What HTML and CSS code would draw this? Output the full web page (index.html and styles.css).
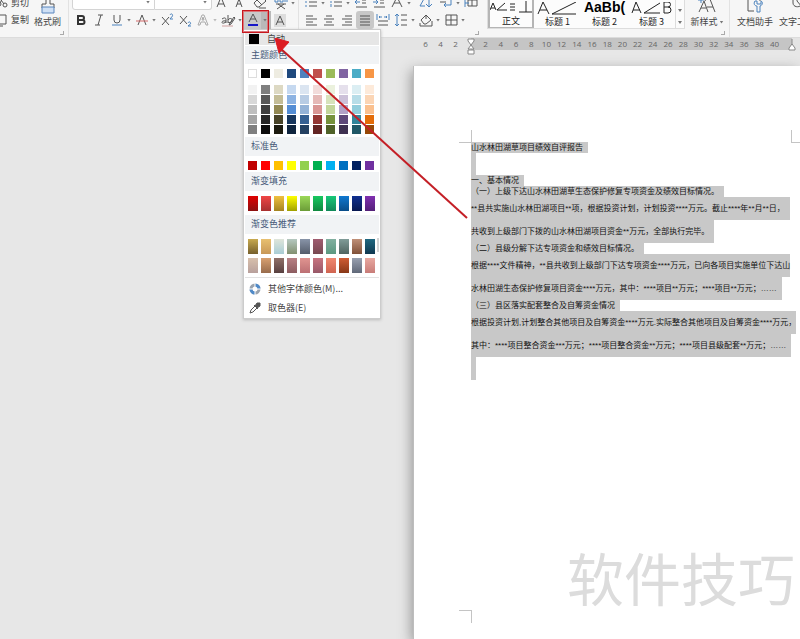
FILE: index.html
```html
<!DOCTYPE html>
<html lang="zh-CN">
<head>
<meta charset="utf-8">
<title>文字编辑</title>
<link rel="stylesheet" href="styles.css">
</head>
<body>
<header class="toolbar">
  <section class="group clipboard" aria-label="剪贴板">
    <div class="stack">
      <button class="labelled row-top"><svg width="12" height="14" viewBox="0 0 12 14"><path d="M2 0l6 8M8 0L4 7"/><circle cx="3" cy="8" r="2"/><circle cx="9" cy="9" r="2"/></svg>剪切</button>
      <button class="labelled row-main"><svg width="12" height="14" viewBox="0 0 12 14"><path d="M2 2h8v9H2zM0 4v9h7"/></svg>复制</button>
    </div>
    <button class="tall-button">
      <svg width="16" height="20" viewBox="0 0 16 20"><path d="M6 0v10H2v4h12v-4h-4V0"/><path class="fill-blue" d="M2 13h12v6H2z"/></svg>
      <span>格式刷</span>
    </button>
    <i class="corner"></i>
  </section>

  <section class="group font" aria-label="字体">
    <div class="row row-top">
      <label class="combo combo-font"><select aria-label="字体"><option></option></select><i class="caret"></i></label>
      <label class="combo combo-size"><select aria-label="字号"><option></option></select><i class="caret"></i></label>
      <button class="tool" aria-label="增大字号"><svg viewBox="0 0 16 16"><path d="M4 12L8 2l4 10M5 9h6"/></svg></button>
      <button class="tool" aria-label="减小字号"><svg viewBox="0 0 16 16"><path d="M5 12l3-8 3 8M6 9h4"/></svg></button>
      <button class="tool wide-eraser" aria-label="清除格式"><svg viewBox="0 0 16 16"><path d="M2 8l7-7 5 5-7 6H5zM5 5l5 5M7 13h7"/></svg></button>
      <button class="tool split" aria-label="拼音指南"><svg viewBox="0 0 16 16"><path class="blue" d="M2 4v3h3V4M7 4h3v3H7zM12 7V4h2v3"/><path d="M3 9h10M5 9l7 5M11 9l-7 5"/></svg><i class="caret"></i></button>
    </div>
    <div class="row row-main">
      <button class="tool" aria-label="加粗"><svg viewBox="0 0 16 16"><path class="heavy" d="M5 4h4a2 2 0 010 4H5zM5 8h4.500a2 2 0 010 4H5z"/></svg></button>
      <button class="tool" aria-label="倾斜"><svg viewBox="0 0 16 16"><path d="M7 3h5M4 13h5M10 3L7 13"/></svg></button>
      <button class="tool split" aria-label="下划线"><svg viewBox="0 0 16 16"><path d="M5 3v5a3 3 0 006 0V3"/><path class="blue" d="M3 13h10"/></svg><i class="caret"></i></button>
      <button class="tool split" aria-label="删除线"><svg viewBox="0 0 16 16"><path d="M4 13L8 3l4 10"/><path class="red" d="M2 9h12"/></svg><i class="caret"></i></button>
      <button class="tool" aria-label="上标"><svg viewBox="0 0 16 16"><path d="M3 5l7 8M10 5l-7 8"/><path class="blue" d="M11 3c1-2 3-1 2.500 1L11 7h3"/></svg></button>
      <button class="tool" aria-label="下标"><svg viewBox="0 0 16 16"><path d="M3 4l7 8M10 4l-7 8"/><path class="blue" d="M11 11c1-2 3-1 2.500 1L11 14h3"/></svg></button>
      <button class="tool split" aria-label="文字效果"><svg viewBox="0 0 16 16"><path class="pale" d="M3 13L7 3h2l4 10h-2l-1-3H6l-1 3zM7 8h2L8 5z"/></svg><i class="caret pale-caret"></i></button>
      <button class="tool split" aria-label="突出显示"><svg viewBox="0 0 16 16"><path class="marker" d="M2 13h11v2H2z"/><path d="M2 7c3-2 4-1 4 1v3M6 9c-5-1-5 3-2 2l2-1M8 3v8M8 8c2-3 5-1 4 1s-3 2-4 1M14 5l-4 6-1 2 2-1 4-6z"/></svg><i class="caret"></i></button>
      <button class="tool split font-color" aria-label="字体颜色" aria-expanded="true"><svg viewBox="0 0 16 16"><path d="M4 10L8 2l4 8M5 7h6"/><path class="navy" d="M3 13h10"/></svg><i class="caret"></i></button>
      <button class="tool" aria-label="字符底纹"><svg viewBox="0 0 16 16"><path class="shade" d="M2 2h12v13H2z"/><path d="M4 13L8 4l4 9M5 10h6"/></svg></button>
    </div>
  </section>

  <section class="group paragraph" aria-label="段落">
    <div class="row row-top">
      <button class="tool split" aria-label="项目符号"><svg viewBox="0 0 16 16"><path d="M6 3h8M6 7h8M6 11h8"/><path class="blue" d="M2 3h2M2 7h2M2 11h2"/></svg><i class="caret"></i></button>
      <button class="tool split" aria-label="编号"><svg viewBox="0 0 16 16"><path d="M6 3h8M6 7h8M6 11h8"/><path class="blue" d="M3 1v3M2 7h2M3 9v3"/></svg><i class="caret"></i></button>
      <button class="tool" aria-label="减少缩进"><svg viewBox="0 0 16 16"><path d="M3 2h10M9 5h4M9 8h4M3 12h11"/><path class="blue" d="M7 7H2l2-2M2 7l2 2"/></svg></button>
      <button class="tool" aria-label="增加缩进"><svg viewBox="0 0 16 16"><path d="M3 2h10M9 5h4M9 8h4M3 12h11"/><path class="blue" d="M2 7h5L5 5M7 7L5 9"/></svg></button>
      <button class="tool split" aria-label="中文版式"><svg viewBox="0 0 16 16"><path d="M3 12L8 2l5 10M5 8h6M3 2l3 2M13 2l-3 2"/></svg><i class="caret"></i></button>
      <button class="tool wide-sort" aria-label="排序"><svg viewBox="0 0 16 16"><path class="blue" d="M3 2h5l-5 9h5M12 1v10M9 9l3 3 3-3"/></svg></button>
      <button class="tool split" aria-label="显示标记"><svg viewBox="0 0 16 16"><path d="M2 3h12M2 7h6"/><path class="blue" d="M13 5v5H6l2-2M6 10l2 2"/></svg><i class="caret"></i></button>
      <button class="tool" aria-label="制表位"><svg viewBox="0 0 16 16"><path d="M5 1h9v10H5zM5 5h9M9 1v10"/><path class="blue" d="M2 5v7M2 8h4"/></svg></button>
    </div>
    <div class="row row-main">
      <button class="tool" aria-label="左对齐"><svg viewBox="0 0 16 16"><path d="M3 4h7M3 7h11M3 10h7M3 13h11"/></svg></button>
      <button class="tool" aria-label="居中"><svg viewBox="0 0 16 16"><path d="M5 4h6M3 7h10M5 10h6M3 13h10"/></svg></button>
      <button class="tool" aria-label="右对齐"><svg viewBox="0 0 16 16"><path d="M6 4h7M3 7h10M6 10h7M3 13h10"/></svg></button>
      <button class="tool pressed" aria-label="两端对齐" aria-pressed="true"><svg viewBox="0 0 16 16"><path d="M3 4h10M3 7h10M3 10h10M3 13h10"/></svg></button>
      <button class="tool" aria-label="分散对齐"><svg viewBox="0 0 16 16"><path d="M3 9h10M3 13h10"/><path class="blue" d="M2 2v6M14 2v6M4 5h3M9 5h3M5 4L4 5l1 1M11 4l1 1-1 1"/></svg></button>
      <button class="tool split" aria-label="行距"><svg viewBox="0 0 16 16"><path d="M8 3h6M8 8h6M8 13h6"/><path class="blue" d="M4 2v12M2 4l2-2 2 2M2 12l2 2 2-2"/></svg><i class="caret"></i></button>
      <button class="tool split" aria-label="底纹颜色"><svg viewBox="0 0 16 16"><path d="M3 8l5-5 5 5-5 4H6zM8 3v4M2 11v3h12V9"/></svg><i class="caret"></i></button>
      <button class="tool split" aria-label="边框"><svg viewBox="0 0 16 16"><path d="M3 3h11v10H3zM8 3v10M3 8h11"/></svg><i class="caret"></i></button>
    </div>
    <i class="corner"></i>
  </section>

  <section class="group styles" aria-label="样式">
    <div class="gallery">
      <button class="card selected"><svg width="44" height="14" viewBox="0 0 44 14"><path d="M1 9L4 2l3 7M2 7h4M16 2L8 9h10M21 3h5M21 6h5M21 9h5M30 11h14M37 0v11"/></svg><span>正文</span></button>
      <button class="card"><svg width="44" height="14" viewBox="0 0 44 14"><path d="M2 12L7 0l6 12M4 8h7M16 12h24M16 12L40 0"/></svg><span>标题 1</span></button>
      <button class="card"><b>AaBb(</b><span>标题 2</span></button>
      <button class="card"><svg width="44" height="14" viewBox="0 0 44 14"><path d="M2 11L6 0l5 11M3 8h7M14 11h16M14 11L30 1M34 0v11h4a3 3 0 000-6h-4M38 5a2 2 0 000-5h-4"/></svg><span>标题 3</span></button>
      <button class="more" aria-label="更多样式"><i class="caret"></i><i class="caret"></i></button>
    </div>
    <button class="tall-button new-style">
      <svg width="20" height="20" viewBox="0 0 20 20"><path d="M2 18L7 7l4 11M4 14h5M8 7l3-7 7 18M10 13h6"/><path class="blue" d="M4 3v6M1 6h6"/></svg>
      <span>新样式<i class="caret"></i></span>
    </button>
    <i class="corner"></i>
  </section>

  <section class="group helpers" aria-label="工具">
    <button class="tall-button"><svg width="20" height="20" viewBox="0 0 20 20"><path d="M9 17H3V0M15 0v7"/><path class="blue" d="M10 7c-2 3 0 5 2 5v6h3v-6c3-1 3-4 1-5v3h-4V7z"/></svg><span>文档助手</span></button>
    <button class="tall-button"><svg width="20" height="20" viewBox="0 0 20 20"><path d="M6 3v6c0 4 6 5 8 2M10 3v4l5 6"/></svg><span>文字工具</span></button>
  </section>
</header>

<div class="ruler">
  <div class="ruler-left"><span>6</span><span>4</span><span>2</span></div>
  <div class="ruler-body" id="ruler"></div>
  <svg class="marker-left" width="8" height="18" viewBox="0 0 8 18"><path d="M1 1h6v2L4 7 1 3zM1 11l3-4 3 4zM1 12h6v4H1z"/></svg>
  <svg class="marker-right" width="8" height="18" viewBox="0 0 8 18"><path d="M4 1v6M1 10l3-4 3 4v2H1z"/></svg>
</div>

<main class="workspace">
  <article class="page">
    <i class="crop top-left"></i><i class="crop top-right"></i><i class="crop bottom-left"></i>
    <p class="short">山水林田湖草项目绩效自评报告</p>
    <p class="short"></p>
    <p class="short"></p>
    <p class="short">一、基本情况</p>
    <p class="short">（一）上级下达山水林田湖草生态保护修复专项资金及绩效目标情况。</p>
    <p>**县共实施山水林田湖项目**项，根据投资计划，计划投资****万元。截止****年**月**日，</p>
    <p>共收到上级部门下拨的山水林田湖项目资金**万元，全部执行完毕。</p>
    <p class="short">（二）县级分解下达专项资金和绩效目标情况。</p>
    <p class="wrapped">根据****文件精神，**县共收到上级部门下达专项资金****万元，已向各项目实施单位下达山</p>
    <p>水林田湖生态保护修复项目资金****万元，其中：****项目**万元；****项目**万元；……</p>
    <p class="short">（三）县区落实配套整合及自筹资金情况</p>
    <p class="wrapped">根据投资计划,计划整合其他项目及自筹资金****万元.实际整合其他项目及自筹资金****万元，</p>
    <p>其中：****项目整合资金***万元；****项目整合资金**万元；****项目县级配套**万元；……</p>
    <p></p>
  </article>
</main>

<aside class="color-menu" aria-label="字体颜色">
  <button class="automatic"><i></i>自动</button>
  <h2 class="first">主题颜色</h2>
  <div class="swatches theme" id="theme"></div>
  <div class="swatches shades" id="shades"></div>
  <h2>标准色</h2>
  <div class="swatches standard" id="standard"></div>
  <h2>渐变填充</h2>
  <div class="swatches gradient" id="gradient"></div>
  <h2>渐变色推荐</h2>
  <div class="swatches gradient suggested" id="suggested"></div>
  <div class="actions">
    <button><svg width="12" height="12" viewBox="0 0 12 12"><circle class="ring-gray" cx="6" cy="6" r="4"/><path class="ring-blue" d="M6 2a4 4 0 014 4M6 10a4 4 0 01-4-4"/><path class="gap" d="M6 0v12M0 6h12"/></svg>其他字体颜色(M)...</button>
    <button><svg width="12" height="12" viewBox="0 0 12 12"><path d="M1 11l1-3 4-4 2 2-4 4zM5 3l4 4"/><path class="solid" d="M6 4l2-3 3 0 0 3-3 2z"/></svg>取色器(E)</button>
  </div>
</aside>

<div class="watermark">软件技巧</div>
<div class="highlight-box"></div>
<svg class="arrow" width="200" height="190" viewBox="0 0 200 190"><path class="shaft" d="M10 10L197 180"/><path class="head" d="M5 0L19 4 9 15z"/></svg>
<script src="script.js"></script>
</body>
</html>
```
FILE: styles.css
```css
* { box-sizing: border-box; }

body {
  margin: 0;
  min-height: 100vh;
  display: flex;
  flex-direction: column;
  overflow: hidden;
  position: relative;
  background: #e7e7e7;
  color: #444;
  font: 9px/12px "Noto Sans CJK SC", sans-serif;
}

button {
  margin: 0;
  padding: 0;
  border: 0;
  background: none;
  color: inherit;
  font: inherit;
  white-space: nowrap;
}

svg { fill: none; stroke: #555; stroke-width: 1; flex: none; }
.blue { stroke: #4b82bd; }
.red { stroke: #d26a6a; }
.pale { stroke: #aaa; }
.heavy { stroke: #333; stroke-width: 2; }
.navy { stroke: #1818c8; stroke-width: 2; }
.shade { fill: #ddd; stroke: none; }
.marker { fill: #e3caca; stroke: none; }
.fill-blue { fill: #cfe0f5; stroke: #5b86bd; }

.caret {
  flex: none;
  width: 4px;
  height: 3px;
  background: #777;
  clip-path: polygon(0 0, 100% 0, 50% 100%);
}
.pale-caret { background: #bbb; }

/* Toolbar: content hangs from the lower edge */
.toolbar {
  display: flex;
  height: 38px;
  overflow: hidden;
  background: #f6f6f6;
  border-bottom: 1px solid #dcdcdc;
}
.group {
  position: relative;
  flex: none;
  display: flex;
  flex-direction: column;
  justify-content: flex-end;
  padding-bottom: 8px;
}
.row { display: flex; align-items: center; }
.row-top { height: 16px; }
.row-main { height: 18px; }
.tool {
  flex: none;
  width: 18px;
  height: 18px;
  display: flex;
  align-items: center;
  justify-content: center;
}
.tool svg { width: 16px; height: 16px; }
.split { width: 25px; justify-content: flex-start; padding-left: 1px; gap: 2px; }
.corner {
  position: absolute;
  right: 4px;
  bottom: 2px;
  width: 4px;
  height: 4px;
  border: solid #aaa;
  border-width: 0 1px 1px 0;
}

.clipboard { width: 69px; flex-direction: row; justify-content: flex-start; align-items: flex-end; border-right: 1px solid #e2e2e2; }
.stack { width: 34px; display: flex; flex-direction: column; }
.labelled { display: flex; align-items: center; gap: 3px; margin-left: -4px; }
.tall-button {
  display: flex;
  flex-direction: column;
  align-items: center;
  justify-content: flex-end;
  gap: 2px;
  padding-bottom: 1px;
}
.tall-button span { display: flex; align-items: center; gap: 2px; }

.font { width: 230px; padding-left: 3px; border-right: 1px solid #e2e2e2; }
.combo {
  flex: none;
  display: flex;
  align-items: center;
  height: 16px;
  margin-bottom: 2px;
  background: #fff;
  border: 1px solid #d4d4d4;
}
.combo select { flex: 1; min-width: 0; height: 12px; border: 0; background: none; appearance: none; }
.combo .caret { margin-right: 4px; }
.combo-font { width: 83px; border-radius: 3px 0 0 3px; }
.combo-size { width: 57px; border-left: 0; border-radius: 0 3px 3px 0; }
.wide-eraser { width: 24px; }
.font-color { width: 27px; background: linear-gradient(90deg, #c9c9c9 17px, #b9b9b9 17px); }

.paragraph { width: 184px; padding-left: 3px; }
.wide-sort { width: 24px; }
.pressed { background: #c8c8c8; border-radius: 3px; }

.styles { width: 247px; flex-direction: row; justify-content: flex-start; padding: 0; align-items: flex-end; border-right: 1px solid #e2e2e2; }
.gallery {
  display: flex;
  height: 30px;
  margin-left: 4px;
  margin-bottom: 8px;
  background: #fcfcfc;
  border: 1px solid #ddd;
  border-top: 0;
  color: #222;
}
.card {
  width: 47px;
  overflow: hidden;
  display: flex;
  flex-direction: column;
  align-items: center;
  justify-content: flex-end;
}
.card b { height: 16px; font: bold 14px/14px "Liberation Sans", sans-serif; color: #000; }
.selected { width: 46px; border: solid #b5b5b5; border-width: 0 2px 1px; }
.card svg { stroke: #222; }
.more { width: 9px; display: flex; flex-direction: column; align-items: center; justify-content: flex-end; gap: 9px; padding-bottom: 4px; border-left: 1px solid #ddd; }
.new-style { width: 48px; margin-bottom: 8px; }

.helpers { flex-direction: row; padding-left: 6px; gap: 4px; }
.helpers .tall-button { width: 38px; }

/* Ruler */
.ruler {
  position: relative;
  display: flex;
  height: 28px;
  padding: 0 8px 16px 418px;
  background: #e4e4e4 linear-gradient(#e7e7e7, #e7e7e7) 0 12px no-repeat;
  color: #666;
  font: 8px/12px "Open Sans", sans-serif;
  text-align: center;
}
.ruler-left { display: flex; width: 53px; }
.ruler-left span { width: 15px; }
.ruler-body { flex: 1; display: flex; padding: 0 10px 0 7px; background: #c5c5c5; }
.ruler-body span { flex: 1 1 0; }
.ruler svg { position: absolute; top: 0; fill: #fff; stroke: #888; }
.marker-left { left: 467px; }
.marker-right { right: 4px; }

/* Document */
.workspace { flex: 1; display: flex; padding-left: 414px; }
.page {
  position: relative;
  flex: 1;
  min-width: 0;
  padding: 76px 0 0 57px;
  background: #fff;
  box-shadow: -1px 0 0 #bdbdbd, -3px 4px 12px #999;
  color: #111;
  font: 8px/11px "Liberation Sans", "Noto Sans CJK SC", sans-serif;
}
.page p {
  width: fit-content;
  height: 23px;
  margin: 0;
  padding-right: 5px;
  line-height: 23px;
  white-space: nowrap;
  background: #c8c8c8;
}
.page .short { height: 11px; line-height: 11px; }
.page .wrapped { padding-right: 0; }
.crop { position: absolute; width: 13px; height: 13px; border: 0 solid #c4c4c4; }
.top-left { left: 45px; top: 64px; border-width: 0 1px 1px 0; }
.top-right { right: -4px; top: 64px; border-width: 0 0 1px 1px; }
.bottom-left { left: 45px; top: 544px; border-width: 1px 1px 0 0; }

/* Colour menu */
.color-menu {
  position: absolute;
  left: 243px;
  top: 29px;
  width: 138px;
  padding: 2px 1px 0;
  background: #fff;
  border: 1px solid #ccc;
  box-shadow: 0 1px 3px #bbb;
}
.automatic {
  display: flex;
  align-items: center;
  gap: 8px;
  width: 100%;
  height: 13px;
  padding-left: 4px;
  background: #e6e6e6;
}
.automatic i { width: 10px; height: 10px; background: #000; }
.color-menu h2 {
  height: 19px;
  margin: 0;
  padding-left: 6px;
  background: #f1f3f5;
  color: #465a78;
  font: 9px/18px "Noto Sans CJK SC", sans-serif;
}
.color-menu .first { margin-top: 1px; height: 18px; }
.swatches { display: grid; grid-template-columns: repeat(10, 9px); column-gap: 4px; padding-left: 3px; }
.swatches button { height: 9px; }
.theme { padding-top: 5px; }
.theme button:first-child { outline: 1px solid #ddd; outline-offset: -1px; }
.shades { row-gap: 1px; padding-top: 7px; padding-bottom: 3px; }
.standard { padding-top: 5px; padding-bottom: 2px; }
.gradient { grid-template-columns: repeat(10, 10px); column-gap: 3px; row-gap: 4px; padding-top: 5px; padding-bottom: 4px; }
.gradient button { height: 15px; }
.suggested { background: linear-gradient(#d4d4d4, #d4d4d4) right 4px / 2px 14px no-repeat; }
.actions { display: flex; flex-direction: column; padding: 1px 0; border-top: 1px solid #e2e2e2; }
.actions button { display: flex; align-items: center; gap: 7px; height: 19px; padding-left: 4px; }
.ring-gray { stroke: #9aa3ae; stroke-width: 3; }
.ring-blue { stroke: #4f8ac9; stroke-width: 3; }
.gap { stroke: #fff; }
.solid { fill: #555; }

/* Overlays */
.watermark {
  position: absolute;
  right: 5px;
  bottom: 31px;
  color: #dcdcdc;
  font: 57px/64px "Noto Sans CJK SC", sans-serif;
}
.highlight-box { position: absolute; left: 242px; top: 10px; width: 27px; height: 23px; border: 1px solid #c8161d; outline: 1px solid #d9767a; outline-offset: -2px; }
.arrow { position: absolute; left: 270px; top: 38px; pointer-events: none; }
.shaft { stroke: #c41f26; stroke-width: 2; }
.head { fill: #dc1c22; stroke: #dc1c22; }
```
FILE: script.js
```js
const palettes = {
  theme: ["#ffffff", "#000000", "#eeece1", "#1f497d", "#4f81bd", "#c0504d", "#9bbb59", "#8064a2", "#4bacc6", "#f79646"],
  shades: [
    "#f2f2f2", "#7f7f7f", "#ddd9c3", "#c6d9f0", "#dbe5f1", "#f2dcdb", "#ebf1dd", "#e5e0ec", "#dbeef3", "#fdeada",
    "#d8d8d8", "#595959", "#c4bd97", "#8db3e2", "#b8cce4", "#e5b9b7", "#d7e3bc", "#ccc1d9", "#b7dde8", "#fbd5b5",
    "#bfbfbf", "#3f3f3f", "#938953", "#548dd4", "#95b3d7", "#d99694", "#c3d69b", "#b2a2c7", "#92cddc", "#fac08f",
    "#a5a5a5", "#262626", "#494429", "#17365d", "#366092", "#953734", "#76923c", "#5f497a", "#31859b", "#e36c09",
    "#7f7f7f", "#0c0c0c", "#1d1b10", "#0f243e", "#244061", "#632423", "#4f6128", "#3f3151", "#205867", "#974806"
  ],
  standard: ["#c00000", "#ff0000", "#ffc000", "#ffff00", "#92d050", "#00b050", "#00b0f0", "#0070c0", "#002060", "#7030a0"],
  gradient: [
    ["#e00000", "#8c1010"], ["#f04545", "#a83030"], ["#f0c040", "#a48420"], ["#ffff00", "#a0a000"], ["#9bd858", "#6b9c38"],
    ["#18c860", "#108840"], ["#18c878", "#108858"], ["#1078d0", "#084c88"], ["#103090", "#081850"], ["#8030b0", "#542078"]
  ],
  suggested: [
    ["#c8aa50", "#76602c"], ["#e8c070", "#c89858"], ["#dfe5da", "#a9cdd5"], ["#b5c8c0", "#829070"], ["#8894a8", "#555d6b"],
    ["#a05c70", "#784850"], ["#82b0a0", "#5c9880"], ["#809c98", "#506460"], ["#c09078", "#805038"], ["#206880", "#103850"],
    ["#d8c0ac", "#b8a09c"], ["#d8a070", "#986c4c"], ["#907068", "#584040"], ["#b88084", "#8c5c60"], ["#e09490", "#bc7074"],
    ["#c87480", "#985868"], ["#f08870", "#d06450"], ["#d05c34", "#883818"], ["#98a0b0", "#606878"], ["#e8a8a0", "#c87c78"]
  ]
};

for (const [id, colors] of Object.entries(palettes)) {
  const grid = document.getElementById(id);
  for (const color of colors) {
    const swatch = document.createElement("button");
    swatch.style.background = Array.isArray(color) ? `linear-gradient(${color.join(",")})` : color;
    swatch.setAttribute("aria-label", [].concat(color).join(" "));
    grid.append(swatch);
  }
}

const ruler = document.getElementById("ruler");
for (let n = 2; n <= 40; n += 2) {
  const mark = document.createElement("span");
  mark.textContent = n;
  ruler.append(mark);
}
```
